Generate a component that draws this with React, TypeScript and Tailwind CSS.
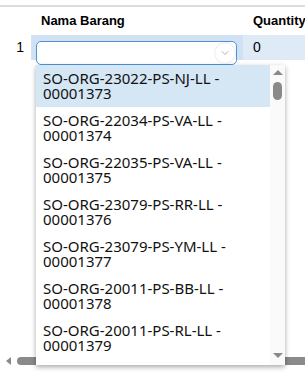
import { ChevronDown } from "lucide-react"

const items = [
  ["SO-ORG-23022-PS-NJ-LL -", "00001373"],
  ["SO-ORG-22034-PS-VA-LL -", "00001374"],
  ["SO-ORG-22035-PS-VA-LL -", "00001375"],
  ["SO-ORG-23079-PS-RR-LL -", "00001376"],
  ["SO-ORG-23079-PS-YM-LL -", "00001377"],
  ["SO-ORG-20011-PS-BB-LL -", "00001378"],
  ["SO-ORG-20011-PS-RL-LL -", "00001379"],
]

export default function App() {
  return (
    <div className="relative w-[305px] h-[378px] overflow-hidden bg-white font-['Liberation_Sans',Arial,sans-serif] text-[13px] text-black">
      <div className="h-[5px]" />
      {/* table */}
      <div className="border-t-2 border-[#dcdcdc] w-[360px]">
        <div className="flex h-[28px] items-center font-bold">
          <div className="w-[32px]" />
          <div className="w-[211px] pl-[9px]">Nama Barang</div>
          <div className="pl-[10px]">Quantity</div>
        </div>
        <div className="flex h-[25px] items-stretch">
          <div className="w-[32px] border-r border-[#d4e3f1] flex items-center justify-end pr-[7px] text-[14px]">1</div>
          <div className="w-[211px] bg-[#cfe1f3] relative">
            <div className="absolute left-[4px] top-[6px] w-[201px] h-[24px] rounded-[5px] border border-[#4d94db] bg-white flex items-center justify-end pr-[1px]">
              <div className="w-[20px] h-[20px] rounded-full bg-white shadow-[0_0_2px_rgba(0,0,0,0.2)] flex items-center justify-center">
                <ChevronDown className="w-[12px] h-[12px] text-[#999]" strokeWidth={1.5} />
              </div>
            </div>
          </div>
          <div className="flex-1 bg-[#deeaf6] flex items-center pl-[10px] text-[14px]">0</div>
        </div>
      </div>

      {/* horizontal scrollbar */}
      <div className="absolute left-0 top-[356px] w-[305px] h-[9px] flex items-center bg-white">
        <div className="w-[17px] flex justify-center">
          <div className="w-0 h-0 border-y-[4px] border-y-transparent border-r-[5px] border-r-[#8a8a8a]" />
        </div>
        <div className="flex-1 h-[8px] rounded-l-full bg-[#8a8a8a]" />
      </div>

      {/* dropdown */}
      <div className="absolute left-[36px] top-[65px] w-[249px] h-[300px] bg-white flex shadow-[0_2px_5px_rgba(0,0,0,0.35)] font-['Noto_Sans',sans-serif] text-[15px] leading-[15px] text-[#111]">
        <div className="w-[234px] overflow-hidden">
          {items.map((it, i) => (
            <div key={i} className={`pl-[7px] py-[6px] ${i === 0 ? "bg-[#d5e6f5]" : ""}`}>
              <div>{it[0]}</div>
              <div>{it[1]}</div>
            </div>
          ))}
        </div>
        <div className="w-[15px] bg-[#fafafa] flex flex-col items-center">
          <div className="mt-[5px] w-0 h-0 border-x-[5px] border-x-transparent border-b-[5px] border-b-[#8a8a8a]" />
          <div className="mt-[7px] w-[9px] h-[18px] rounded-full bg-[#8a8a8a]" />
          <div className="flex-1" />
          <div className="mb-[7px] w-0 h-0 border-x-[5px] border-x-transparent border-t-[5px] border-t-[#8a8a8a]" />
        </div>
      </div>
    </div>
  )
}
